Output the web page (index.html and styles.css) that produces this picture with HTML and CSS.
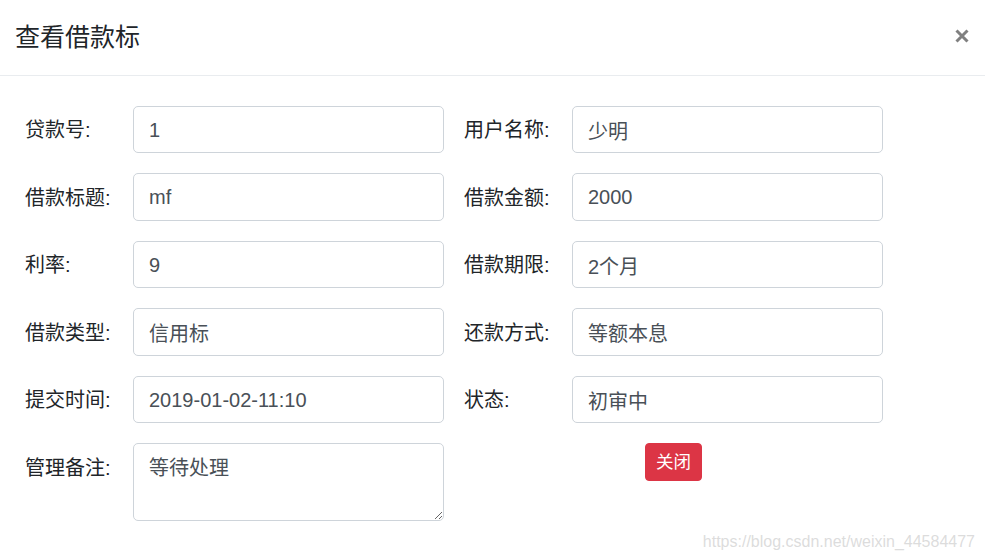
FILE: index.html
```html
<!DOCTYPE html>
<html lang="zh">
<head>
<meta charset="utf-8">
<title>查看借款标</title>
<link rel="stylesheet" href="styles.css">
</head>
<body>
<div class="modal">
  <div class="modal-header">
    <h5 class="modal-title">查看借款标</h5>
    <button class="close" type="button" aria-label="Close">
      <svg width="14" height="14" viewBox="0 0 14 14"><path d="M1.5 1.5 L12.5 12.5 M12.5 1.5 L1.5 12.5" stroke="#808080" stroke-width="3" stroke-linecap="butt"/></svg>
    </button>
  </div>
  <div class="modal-body">
    <form class="form-grid">
      <label class="col-label">贷款号:</label>
      <input class="form-control" type="text" value="1" readonly>
      <label class="col-label">用户名称:</label>
      <input class="form-control" type="text" value="少明" readonly>

      <label class="col-label">借款标题:</label>
      <input class="form-control" type="text" value="mf" readonly>
      <label class="col-label">借款金额:</label>
      <input class="form-control" type="text" value="2000" readonly>

      <label class="col-label">利率:</label>
      <input class="form-control" type="text" value="9" readonly>
      <label class="col-label">借款期限:</label>
      <input class="form-control" type="text" value="2个月" readonly>

      <label class="col-label">借款类型:</label>
      <input class="form-control" type="text" value="信用标" readonly>
      <label class="col-label">还款方式:</label>
      <input class="form-control" type="text" value="等额本息" readonly>

      <label class="col-label">提交时间:</label>
      <input class="form-control" type="text" value="2019-01-02-11:10" readonly>
      <label class="col-label">状态:</label>
      <input class="form-control" type="text" value="初审中" readonly>

      <label class="col-label">管理备注:</label>
      <textarea class="form-control textarea" rows="2">等待处理</textarea>
      <div class="actions">
        <button class="btn-danger" type="button">关闭</button>
      </div>
    </form>
  </div>
  <div class="watermark">https://blog.csdn.net/weixin_44584477</div>
</div>
</body>
</html>
```

FILE: styles.css
```css
* { box-sizing: border-box; }
html, body {
  margin: 0;
  padding: 0;
  background: #fff;
}
body {
  font-family: "Liberation Sans", "Noto Sans CJK SC", sans-serif;
  color: #212529;
  font-size: 20px;
  line-height: 1.5;
}
.modal {
  position: relative;
  width: 985px;
  height: 559px;
  background: #fff;
  overflow: hidden;
}
.modal-header {
  display: flex;
  align-items: flex-start;
  justify-content: space-between;
  padding: 18.5px 20px 18.5px 15px;
  border-bottom: 1px solid #e9ecef;
}
.modal-title {
  margin: 0;
  font-size: 25px;
  font-weight: 400;
  line-height: 37.5px;
  color: #212529;
}
.close {
  background: transparent;
  border: 0;
  padding: 0;
  margin: 10px -4px 0 0;
  width: 14px;
  height: 14px;
  display: flex;
  cursor: pointer;
}
.modal-body {
  padding: 30px 20px 20px 25px;
}
.form-grid {
  display: grid;
  grid-template-columns: 88px 311px 88px 311px;
  column-gap: 20px;
  row-gap: 20px;
  align-items: start;
}
.col-label {
  font-size: 20px;
  line-height: 30px;
  padding-top: 9.75px;
  color: #212529;
  white-space: nowrap;
}
.form-control {
  display: block;
  width: 311px;
  height: 47.5px;
  padding: 8.5px 15px 6.5px;
  font-family: "Liberation Sans", "Noto Sans CJK SC", sans-serif;
  font-size: 20px;
  line-height: 30px;
  color: #495057;
  background: #fff;
  border: 1px solid #ced4da;
  border-radius: 5px;
  outline: none;
  margin: 0;
}
.textarea {
  height: 77.5px;
  resize: vertical;
}
.actions {
  grid-column: span 2;
  display: flex;
  justify-content: center;
}
.btn-danger {
  font-family: "Liberation Sans", "Noto Sans CJK SC", sans-serif;
  font-size: 17.5px;
  line-height: 26.25px;
  padding: 5px 10px;
  color: #fff;
  background: #dc3545;
  border: 1px solid #dc3545;
  border-radius: 4px;
  cursor: pointer;
}
.watermark {
  position: absolute;
  right: 10px;
  bottom: 7px;
  font-family: "Liberation Sans", sans-serif;
  font-size: 16px;
  line-height: 20px;
  color: rgba(205, 205, 205, 0.7);
}
```
